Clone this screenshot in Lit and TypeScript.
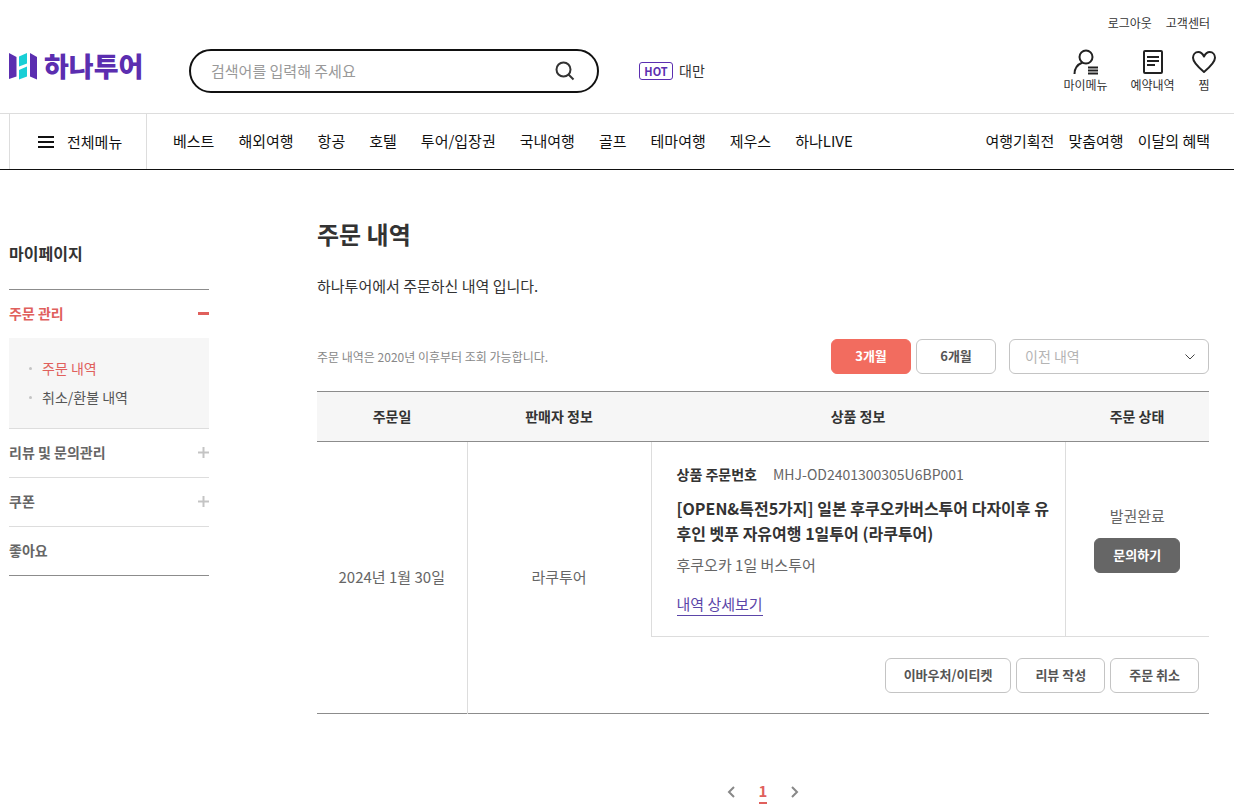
import { LitElement, html, css, svg, nothing } from "lit";
import { customElement, state } from "lit/decorators.js";
import { classMap } from "lit/directives/class-map.js";

interface MenuGroup {
  label: string;
  toggle?: "open" | "closed";
  children?: string[];
}

const MAIN_MENU = ["베스트", "해외여행", "항공", "호텔", "투어/입장권", "국내여행", "골프", "테마여행", "제우스", "하나LIVE"];
const SUB_MENU = ["여행기획전", "맞춤여행", "이달의 혜택"];
const SIDE_MENU: MenuGroup[] = [
  { label: "주문 관리", toggle: "open", children: ["주문 내역", "취소/환불 내역"] },
  { label: "리뷰 및 문의관리", toggle: "closed" },
  { label: "쿠폰", toggle: "closed" },
  { label: "좋아요" },
];

const base = css`
  :host {
    display: block;
  }
  * {
    box-sizing: border-box;
  }
  a {
    color: inherit;
    text-decoration: none;
  }
  button,
  input,
  select {
    font: inherit;
    color: inherit;
    margin: 0;
  }
  button {
    cursor: pointer;
  }
  ul {
    list-style: none;
    margin: 0;
    padding: 0;
  }
  svg {
    display: block;
  }
`;

@customElement("site-header")
export class SiteHeader extends LitElement {
  static styles = [
    base,
    css`
      .top {
        display: flex;
        align-items: flex-start;
        height: 113px;
        padding: 0 12px 0 9px;
      }
      .logo {
        display: flex;
        align-items: center;
        gap: 6px;
        width: 180px;
        height: 34px;
        margin-top: 49px;
        font-size: 27px;
        font-weight: 900;
        line-height: 34px;
        color: #5b2eb0;
      }
      .search {
        display: flex;
        align-items: center;
        width: 410px;
        height: 44px;
        margin-top: 49px;
        padding: 0 20px;
        border: 2px solid #111;
        border-radius: 22px;
      }
      .search input {
        flex: 1;
        min-width: 0;
        padding: 0 0 2px;
        border: 0;
        outline: 0;
        background: none;
        font-size: 15px;
      }
      .search input::placeholder {
        color: #999;
        opacity: 1;
      }
      .search button {
        padding: 0 2px;
        border: 0;
        background: none;
      }
      .hot {
        display: flex;
        align-items: flex-end;
        gap: 6px;
        margin: 60px 0 0 40px;
        font-size: 14px;
        line-height: 20px;
        color: #333;
      }
      .badge {
        width: 34px;
        height: 18px;
        border: 1px solid #5b2eb0;
        border-radius: 3px;
        font-size: 11px;
        font-weight: 700;
        line-height: 16px;
        text-align: center;
        color: #5b2eb0;
      }
      .side {
        margin-left: auto;
      }
      .util {
        display: flex;
        justify-content: flex-end;
        gap: 14px;
        padding: 15px 12px 0 0;
        font-size: 12px;
        line-height: 16px;
        color: #333;
      }
      .quick {
        display: grid;
        grid-template-columns: 67px 67px 36px;
        margin-top: 16px;
        font-size: 12px;
        line-height: 18px;
        color: #333;
      }
      .quick a {
        display: flex;
        flex-direction: column;
        align-items: center;
        white-space: nowrap;
      }
      .nav {
        display: flex;
        height: 57px;
        padding: 0 24px 0 9px;
        border-top: 1px solid #ddd;
        border-bottom: 1px solid #111;
        font-size: 15px;
        line-height: 22px;
        color: #111;
        white-space: nowrap;
      }
      .all {
        display: flex;
        align-items: center;
        gap: 13px;
        width: 138px;
        padding: 0 0 0 28px;
        border: 1px solid #ddd;
        border-width: 0 1px;
        background: none;
      }
      .list {
        display: flex;
        align-items: center;
        gap: 24px;
        margin-left: 26px;
        padding-bottom: 2px;
      }
      .list.end {
        gap: 14px;
        margin-left: auto;
      }
    `,
  ];

  render() {
    return html`
      <header>
        <div class="top">
          <a class="logo" href="#" aria-label="하나투어">
            <svg width="29" height="27" viewBox="0 0 29 27" aria-hidden="true">
              <path d="M0 0L7.500 4V23.500L0 26Z" fill="#5b2eb0" />
              <path d="M21 0L28 4V26.500L21 23.500Z" fill="#5b2eb0" />
              <path d="M10 3.500L18 0V10.500L10 13.500Z" fill="#19cfd6" />
              <path d="M10 17L18 13.500V23.500L10 26.500Z" fill="#19cfd6" />
            </svg>
            <span>하나투어</span>
          </a>
          <form class="search" role="search" @submit=${(e: Event) => e.preventDefault()}>
            <input type="text" aria-label="검색어" placeholder="검색어를 입력해 주세요" />
            <button type="submit" aria-label="검색">
              <svg width="20" height="20" viewBox="0 0 20 20" fill="none" stroke="#333" stroke-width="2">
                <circle cx="8.500" cy="8.500" r="7" />
                <path d="M13.500 13.500L18.500 18.500" />
              </svg>
            </button>
          </form>
          <div class="hot"><span class="badge">HOT</span><a href="#">대만</a></div>
          <div class="side">
            <div class="util"><a href="#">로그아웃</a><a href="#">고객센터</a></div>
            <div class="quick">
              <a href="#">
                <svg width="26" height="29" viewBox="0 0 26 29" fill="none" stroke="#222" stroke-width="2">
                  <circle cx="13" cy="10" r="6.500" />
                  <path d="M9.500 15.500C4.500 17.500 1.500 21 1.500 27M15 20.500H25M15 23.500H25M15 26.500H25" />
                </svg>
                <span>마이메뉴</span>
              </a>
              <a href="#">
                <svg width="26" height="29" viewBox="0 0 26 29" fill="none" stroke="#222" stroke-width="2">
                  <rect x="4" y="4" width="18" height="22" rx="1" />
                  <path d="M7 10H19M7 14H19M7 18H15" />
                </svg>
                <span>예약내역</span>
              </a>
              <a href="#">
                <svg width="26" height="29" viewBox="0 0 26 29" fill="none" stroke="#222" stroke-width="2" stroke-linejoin="round">
                  <path d="M13 9.500C11.500 6.500 9.500 5 7.300 5C4 5 2 7.800 2 10.800C2 15.500 7 20 13 25C19 20 24 15.500 24 10.800C24 7.800 22 5 18.700 5C16.500 5 14.500 6.500 13 9.500Z" />
                </svg>
                <span>찜</span>
              </a>
            </div>
          </div>
        </div>
        <nav class="nav">
          <button class="all" type="button">
            <svg width="16" height="12" viewBox="0 0 16 12" stroke="#111" stroke-width="2" aria-hidden="true">
              <path d="M0 1H16M0 6H16M0 11H16" />
            </svg>
            <span>전체메뉴</span>
          </button>
          <div class="list">${MAIN_MENU.map((m) => html`<a href="#">${m}</a>`)}</div>
          <div class="list end">${SUB_MENU.map((m) => html`<a href="#">${m}</a>`)}</div>
        </nav>
      </header>
    `;
  }
}

@customElement("side-menu")
export class SideMenu extends LitElement {
  static styles = [
    base,
    css`
      h2 {
        margin: 0;
        padding: 20px 0 24px;
        border-bottom: 1px solid #8c8c8c;
        font-size: 16px;
        font-weight: 700;
        line-height: 24px;
        color: #333;
      }
      .groups {
        border-bottom: 1px solid #8c8c8c;
      }
      .group + .group {
        border-top: 1px solid #ddd;
      }
      .head {
        display: flex;
        align-items: center;
        justify-content: space-between;
        width: 100%;
        height: 48px;
        padding: 0 0 2px;
        border: 0;
        background: none;
        font-size: 14px;
        font-weight: 700;
        line-height: 20px;
        color: #666;
      }
      .active {
        color: #e0605c;
      }
      .sub {
        padding: 16px 20px;
        background: #f6f6f6;
        font-size: 14px;
        line-height: 29px;
        color: #555;
      }
      .sub li {
        display: flex;
        align-items: center;
        gap: 10px;
      }
      .sub li::before {
        content: "";
        width: 3px;
        height: 3px;
        border-radius: 2px;
        background: #c4c4c4;
      }
    `,
  ];

  render() {
    return html`
      <h2>마이페이지</h2>
      <ul class="groups">
        ${SIDE_MENU.map(
          (g) => html`
            <li class="group">
              <button type="button" class=${classMap({ head: true, active: g.toggle === "open" })}>
                <span>${g.label}</span>
                ${g.toggle
                  ? html`<svg width="11" height="11" viewBox="0 0 11 11" stroke-width=${g.toggle === "open" ? 3 : 2} stroke=${g.toggle === "open" ? "#e0605c" : "#c4c4c4"}>
                      <path d="M0 5.500H11" />
                      ${g.toggle === "closed" ? svg`<path d="M5.500 0V11" />` : nothing}
                    </svg>`
                  : nothing}
              </button>
              ${g.children
                ? html`<ul class="sub">
                    ${g.children.map((c, i) => html`<li><a href="#" class=${classMap({ active: i === 0 })}>${c}</a></li>`)}
                  </ul>`
                : nothing}
            </li>
          `
        )}
      </ul>
    `;
  }
}

@customElement("order-list")
export class OrderList extends LitElement {
  @state() private months = 3;

  static styles = [
    base,
    css`
      h1 {
        margin: 0;
        font-size: 24px;
        font-weight: 700;
        line-height: 34px;
        color: #333;
      }
      .desc {
        margin: 24px 0 0;
        font-size: 15px;
        line-height: 22px;
        color: #333;
      }
      .filter {
        display: flex;
        align-items: center;
        gap: 5px;
        margin: 42px 0 17px;
      }
      .note {
        flex: 1;
        margin: 0;
        font-size: 12px;
        line-height: 18px;
        color: #888;
      }
      .btn {
        height: 35px;
        padding: 0 18px 2px;
        border: 1px solid #c4c4c4;
        border-radius: 6px;
        background: #fff;
        font-size: 13px;
        font-weight: 700;
        line-height: 20px;
        color: #555;
      }
      .period {
        width: 80px;
      }
      .on {
        border-color: #f26c5f;
        background: #f26c5f;
        color: #fff;
      }
      .dark {
        border-color: #666;
        background: #666;
        color: #fff;
      }
      .picker {
        display: grid;
        width: 200px;
        margin-left: 8px;
      }
      .picker select,
      .picker svg {
        grid-area: 1 / 1;
      }
      .picker select {
        appearance: none;
        height: 35px;
        padding: 0 32px 2px 15px;
        border: 1px solid #c4c4c4;
        border-radius: 6px;
        background: #fff;
        font-size: 14px;
        line-height: 20px;
        color: #b4b4b4;
      }
      .picker svg {
        align-self: center;
        justify-self: end;
        margin-right: 13px;
        pointer-events: none;
      }
      table {
        width: 100%;
        border-collapse: collapse;
        border-bottom: 1px solid #8c8c8c;
        table-layout: fixed;
        font-size: 15px;
        line-height: 22px;
        color: #666;
        text-align: center;
      }
      .c1 {
        width: 150px;
      }
      .c2 {
        width: 184px;
      }
      .c4 {
        width: 144px;
      }
      th {
        height: 50px;
        padding: 0 0 2px;
        border: 1px solid #8c8c8c;
        border-width: 1px 0;
        background: #f6f6f6;
        font-size: 14px;
        font-weight: 700;
        color: #333;
      }
      td {
        padding: 0 0 2px;
      }
      .date {
        border-right: 1px solid #ddd;
      }
      .product {
        padding: 21px 12px 20px 25px;
        border: 1px solid #ddd;
        border-top: 0;
        text-align: left;
      }
      .status {
        padding: 0;
        border-bottom: 1px solid #ddd;
      }
      .number {
        display: flex;
        gap: 16px;
        font-size: 14px;
      }
      .number b {
        color: #333;
      }
      .name {
        margin: 11px 0 8px;
        font-size: 16px;
        font-weight: 700;
        line-height: 25px;
        color: #333;
      }
      .option {
        margin: 0 0 17px;
      }
      .detail {
        display: inline-block;
        border-bottom: 1px solid #5b45a8;
        color: #5b45a8;
      }
      .status p {
        margin: 0 0 11px;
      }
      .tools {
        padding: 21px 10px 20px;
      }
      .row {
        display: flex;
        justify-content: flex-end;
        gap: 5px;
      }
      .pages {
        display: flex;
        justify-content: center;
        align-items: center;
        gap: 24px;
        margin-top: 66px;
        color: #888;
      }
      .pages a {
        display: block;
      }
      .current {
        border-bottom: 2px solid #e0605c;
        font-size: 15px;
        font-weight: 700;
        line-height: 22px;
        color: #e0605c;
      }
    `,
  ];

  private period(n: number) {
    return html`<button
      type="button"
      class=${classMap({ btn: true, period: true, on: this.months === n })}
      @click=${() => (this.months = n)}
    >
      ${n}개월
    </button>`;
  }

  render() {
    return html`
      <h1>주문 내역</h1>
      <p class="desc">하나투어에서 주문하신 내역 입니다.</p>
      <div class="filter">
        <p class="note">주문 내역은 2020년 이후부터 조회 가능합니다.</p>
        ${this.period(3)} ${this.period(6)}
        <div class="picker">
          <select aria-label="이전 내역">
            <option>이전 내역</option>
          </select>
          <svg width="12" height="8" viewBox="0 0 12 8" fill="none" stroke="#444"><path d="M1.500 1.500L6 6L10.500 1.500" /></svg>
        </div>
      </div>
      <table>
        <colgroup>
          <col class="c1" />
          <col class="c2" />
          <col />
          <col class="c4" />
        </colgroup>
        <thead>
          <tr>
            <th scope="col">주문일</th>
            <th scope="col">판매자 정보</th>
            <th scope="col">상품 정보</th>
            <th scope="col">주문 상태</th>
          </tr>
        </thead>
        <tbody>
          <tr>
            <td class="date" rowspan="2">2024년 1월 30일</td>
            <td rowspan="2">라쿠투어</td>
            <td class="product">
              <div class="number"><b>상품 주문번호</b><span>MHJ-OD2401300305U6BP001</span></div>
              <p class="name">[OPEN&amp;특전5가지] 일본 후쿠오카버스투어 다자이후 유후인 벳푸 자유여행 1일투어 (라쿠투어)</p>
              <p class="option">후쿠오카 1일 버스투어</p>
              <a class="detail" href="#">내역 상세보기</a>
            </td>
            <td class="status">
              <p>발권완료</p>
              <button type="button" class="btn dark">문의하기</button>
            </td>
          </tr>
          <tr>
            <td class="tools" colspan="2">
              <div class="row">
                <button type="button" class="btn">이바우처/이티켓</button>
                <button type="button" class="btn">리뷰 작성</button>
                <button type="button" class="btn">주문 취소</button>
              </div>
            </td>
          </tr>
        </tbody>
      </table>
      <nav class="pages" aria-label="페이지">
        <a href="#" aria-label="이전">
          <svg width="8" height="12" viewBox="0 0 8 12" fill="none" stroke="#888" stroke-width="2"><path d="M7 1L2 6L7 11" /></svg>
        </a>
        <a href="#" class="current" aria-current="page">1</a>
        <a href="#" aria-label="다음">
          <svg width="8" height="12" viewBox="0 0 8 12" fill="none" stroke="#888" stroke-width="2"><path d="M1 1L6 6L1 11" /></svg>
        </a>
      </nav>
    `;
  }
}

@customElement("app-root")
export class AppRoot extends LitElement {
  static styles = [
    base,
    css`
      :host {
        min-height: 100vh;
        background: #fff;
        font-family: "Noto Sans CJK KR", "Noto Sans", sans-serif;
      }
      .page {
        display: grid;
        grid-template-columns: 200px minmax(0, 1fr);
        gap: 108px;
        align-items: start;
        padding: 47px 25px 0 9px;
      }
      side-menu {
        padding-top: 4px;
      }
    `,
  ];

  render() {
    return html`
      <site-header></site-header>
      <main class="page">
        <side-menu></side-menu>
        <order-list></order-list>
      </main>
    `;
  }
}
